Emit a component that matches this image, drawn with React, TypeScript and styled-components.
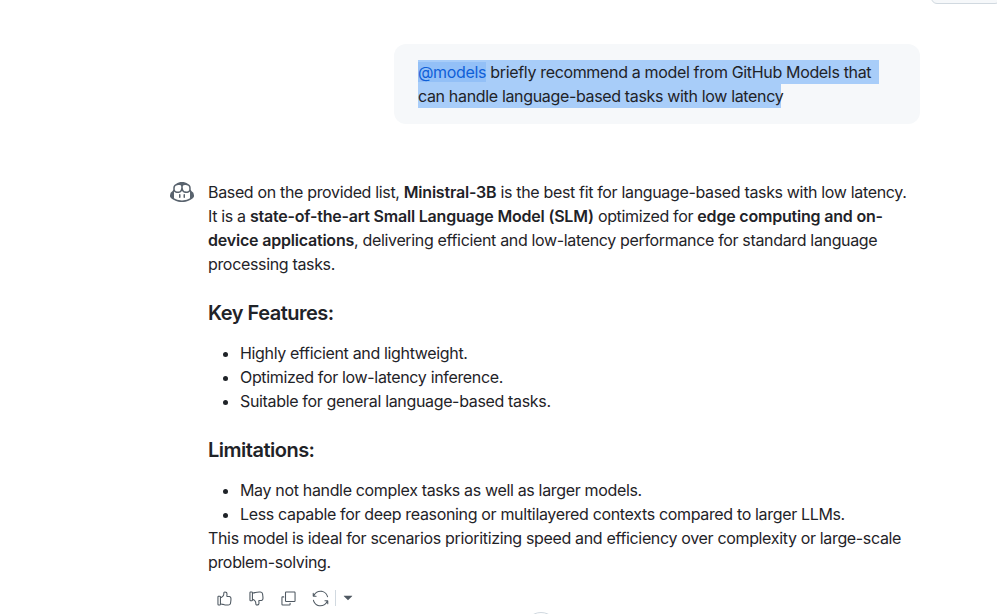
import React from "react";
import styled, { createGlobalStyle } from "styled-components";
import { GoCopilot, GoCopy, GoSync, GoThumbsdown, GoThumbsup, GoTriangleDown } from "react-icons/go";

const GlobalStyle = createGlobalStyle`
  html, body {
    margin: 0;
    padding: 0;
    background: #ffffff;
  }
  body {
    font-family: Inter, "Liberation Sans", sans-serif;
    font-size: 16px;
    line-height: 24px;
    letter-spacing: -0.34px;
    color: #1f2328;
    overflow: hidden;
  }
  strong {
    font-weight: 600;
    letter-spacing: -0.2px;
  }
`;

const Page = styled.div`
  position: relative;
  width: 997px;
  height: 614px;
  overflow: hidden;
`;

const TopTab = styled.div`
  position: absolute;
  top: -10px;
  right: -4px;
  width: 68px;
  height: 12px;
  border: 1px solid #d1d9e0;
  border-radius: 6px;
  background: #f6f8fa;
`;

const ScrollCircle = styled.div`
  position: absolute;
  left: 524px;
  top: 612px;
  width: 32px;
  height: 32px;
  border: 1px solid #d1d9e0;
  border-radius: 50%;
  background: #ffffff;
`;

const Thread = styled.div`
  display: flex;
  flex-direction: column;
  padding: 44px 77px 0 170px;
`;

const UserRow = styled.div`
  display: flex;
  justify-content: flex-end;
  margin-bottom: 56px;
`;

const UserBubble = styled.div`
  width: 478px;
  padding: 16px 24px;
  border-radius: 12px;
  background: #f6f8fa;
`;

const SelectedLine = styled.div<{ $width: number }>`
  width: ${(p) => p.$width}px;
  height: 24px;
  background: #a8cdf9;
  white-space: nowrap;
`;

const Mention = styled.span`
  color: #0f5fd7;
  background: #93c0f7;
`;

const AnswerRow = styled.div`
  display: flex;
  gap: 14px;
`;

const Avatar = styled.div`
  flex: none;
  width: 24px;
  height: 24px;
  color: #59636e;
`;

const Answer = styled.div`
  width: 705px;
`;

const Paragraph = styled.p`
  margin: 0;
`;

const Heading = styled.h3`
  margin: 25px 0 15px;
  font-size: 20px;
  line-height: 25px;
  font-weight: 600;
  letter-spacing: -0.5px;
`;

const List = styled.ul`
  margin: 0;
  padding-left: 32px;
`;

const Actions = styled.div`
  display: flex;
  align-items: center;
  height: 32px;
  margin-top: 8px;
  color: #4f5962;
`;

const ActionButton = styled.button`
  display: flex;
  align-items: center;
  justify-content: center;
  width: 32px;
  height: 24px;
  padding: 0;
  border: 0;
  background: none;
  color: inherit;
`;

const Divider = styled.div`
  width: 1px;
  height: 16px;
  margin-left: -1px;
  background: #d1d9e0;
`;

const CaretButton = styled(ActionButton)`
  width: 23px;
`;

const App: React.FC = () => {
  return (
    <Page>
      <GlobalStyle />
      <TopTab />
      <Thread>
        <UserRow>
          <UserBubble>
            <SelectedLine $width={461}>
              <Mention>@models</Mention> briefly recommend a model from GitHub Models that
            </SelectedLine>
            <SelectedLine $width={363}>
              can handle language-based tasks with low latency
            </SelectedLine>
          </UserBubble>
        </UserRow>
        <AnswerRow>
          <Avatar>
            <GoCopilot size={24} />
          </Avatar>
          <Answer>
            <Paragraph>
              Based on the provided list, <strong>Ministral-3B</strong> is the best fit for
              language-based tasks with low latency. It is a{" "}
              <strong>state-of-the-art Small Language Model (SLM)</strong> optimized for{" "}
              <strong>edge computing and on-device applications</strong>, delivering efficient
              and low-latency performance for standard language processing tasks.
            </Paragraph>
            <Heading>Key Features:</Heading>
            <List>
              <li>Highly efficient and lightweight.</li>
              <li>Optimized for low-latency inference.</li>
              <li>Suitable for general language-based tasks.</li>
            </List>
            <Heading>Limitations:</Heading>
            <List>
              <li>May not handle complex tasks as well as larger models.</li>
              <li>Less capable for deep reasoning or multilayered contexts compared to larger LLMs.</li>
            </List>
            <Paragraph>
              This model is ideal for scenarios prioritizing speed and efficiency over complexity
              or large-scale problem-solving.
            </Paragraph>
            <Actions>
              <ActionButton><GoThumbsup size={17} /></ActionButton>
              <ActionButton><GoThumbsdown size={17} /></ActionButton>
              <ActionButton><GoCopy size={17} /></ActionButton>
              <ActionButton><GoSync size={17} /></ActionButton>
              <Divider />
              <CaretButton><GoTriangleDown size={16} /></CaretButton>
            </Actions>
          </Answer>
        </AnswerRow>
      </Thread>
      <ScrollCircle />
    </Page>
  );
};

export default App;
